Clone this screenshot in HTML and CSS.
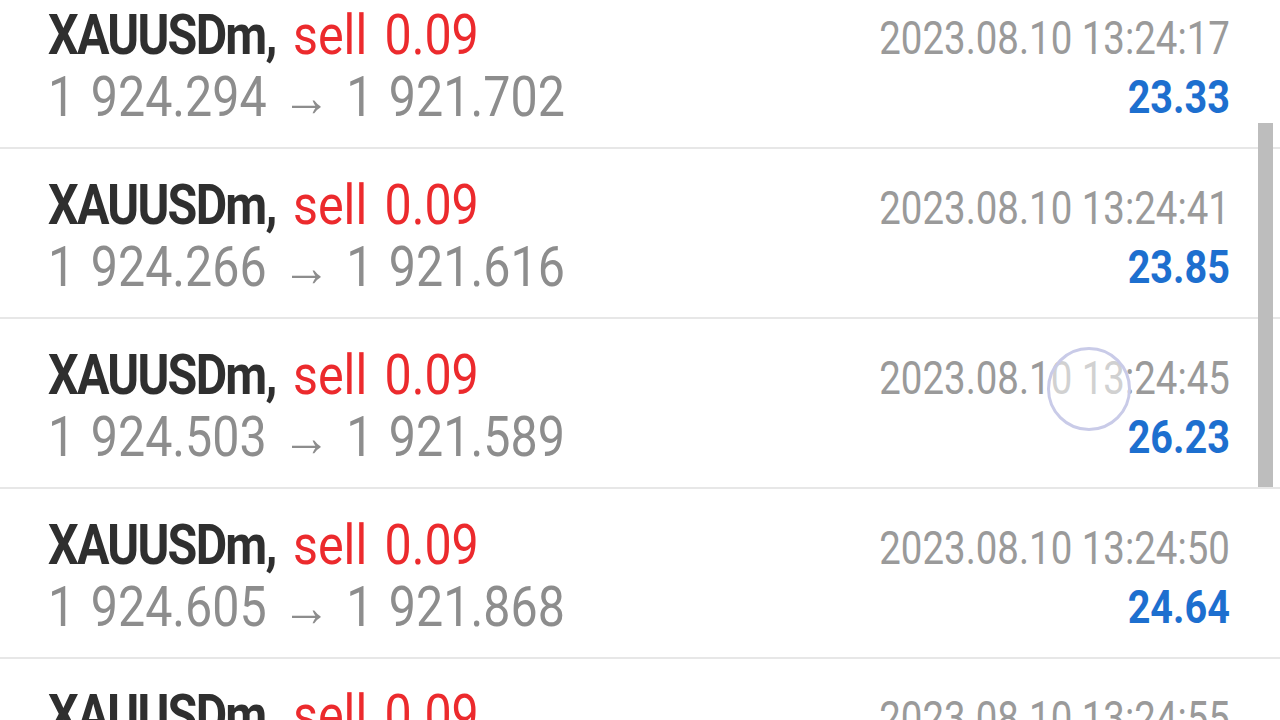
FILE: index.html
```html
<!DOCTYPE html>
<html lang="en">
<head>
    <meta charset="UTF-8">
    <meta name="viewport" content="width=device-width, initial-scale=1.0">
    <title>History</title>
    <link rel="stylesheet" href="styles.css">
</head>
<body>
    <div class="history">
        <ul class="deals">
            <li class="deal">
                <div class="deal-left">
                    <span class="line title"><b class="symbol">XAUUSDm,</b> <span class="type">sell 0.09</span></span>
                    <span class="line prices">1 924.294 → 1 921.702</span>
                </div>
                <div class="deal-right">
                    <span class="line time">2023.08.10 13:24:17</span>
                    <span class="line profit">23.33</span>
                </div>
            </li>
            <li class="deal">
                <div class="deal-left">
                    <span class="line title"><b class="symbol">XAUUSDm,</b> <span class="type">sell 0.09</span></span>
                    <span class="line prices">1 924.266 → 1 921.616</span>
                </div>
                <div class="deal-right">
                    <span class="line time">2023.08.10 13:24:41</span>
                    <span class="line profit">23.85</span>
                </div>
            </li>
            <li class="deal">
                <div class="deal-left">
                    <span class="line title"><b class="symbol">XAUUSDm,</b> <span class="type">sell 0.09</span></span>
                    <span class="line prices">1 924.503 → 1 921.589</span>
                </div>
                <div class="deal-right">
                    <span class="line time">2023.08.10 13:24:45</span>
                    <span class="line profit">26.23</span>
                </div>
            </li>
            <li class="deal">
                <div class="deal-left">
                    <span class="line title"><b class="symbol">XAUUSDm,</b> <span class="type">sell 0.09</span></span>
                    <span class="line prices">1 924.605 → 1 921.868</span>
                </div>
                <div class="deal-right">
                    <span class="line time">2023.08.10 13:24:50</span>
                    <span class="line profit">24.64</span>
                </div>
            </li>
            <li class="deal">
                <div class="deal-left">
                    <span class="line title"><b class="symbol">XAUUSDm,</b> <span class="type">sell 0.09</span></span>
                    <span class="line prices">1 924.611 → 1 921.870</span>
                </div>
                <div class="deal-right">
                    <span class="line time">2023.08.10 13:24:55</span>
                    <span class="line profit">24.60</span>
                </div>
            </li>
        </ul>

        <!-- overlays -->
        <div class="scrollbar"></div>
        <div class="touch"></div>
    </div>
</body>
</html>
```

FILE: styles.css
```css
body {
    margin: 0;
    padding: 0;
    background-color: #ffffff;
    font-family: Roboto, "Liberation Sans", sans-serif;
    overflow: hidden;
}
.history {
    position: relative;
    width: 1280px;
    height: 720px;
    overflow: hidden;
}
.deals {
    list-style: none;
    margin: -21px 0 0 0;
    padding: 0;
}
.deal {
    display: flex;
    justify-content: space-between;
    padding: 25px 50px 19px 48px;
    border-bottom: 2px solid #e7e7e7;
}
.deal-left, .deal-right {
    display: flex;
    flex-direction: column;
}
.deal-right {
    align-items: flex-end;
}
.line {
    display: inline-block;
    height: 62px;
    line-height: 62px;
    white-space: nowrap;
}
.deal-left .line {
    font-size: 55px;
    transform: scaleX(0.88);
    transform-origin: left center;
}
.deal-left .title {
    word-spacing: 6px;
}
.symbol {
    color: #2f2f2f;
    font-weight: 700;
    letter-spacing: -2px;
}
.type {
    color: #ec2a2d;
}
.deal-left .prices {
    color: #8d8d8d;
    word-spacing: 4px;
}
.deal-right .line {
    font-size: 46px;
    transform: scaleX(0.835);
    transform-origin: right center;
}
.time {
    color: #9a9a9a;
    padding-top: 6px;
    height: 56px;
    line-height: 56px;
}
.deal-right .profit {
    color: #1d6fcf;
    font-weight: 700;
    transform: scaleX(0.86);
}
.scrollbar {
    position: absolute;
    top: 123px;
    left: 1258px;
    width: 15px;
    height: 364px;
    background-color: #bdbdbd;
}
.touch {
    position: absolute;
    top: 347px;
    left: 1047px;
    width: 78px;
    height: 78px;
    border: 3px solid #c9cbe8;
    border-radius: 50%;
    background-color: rgba(255, 255, 255, 0.55);
}
```
